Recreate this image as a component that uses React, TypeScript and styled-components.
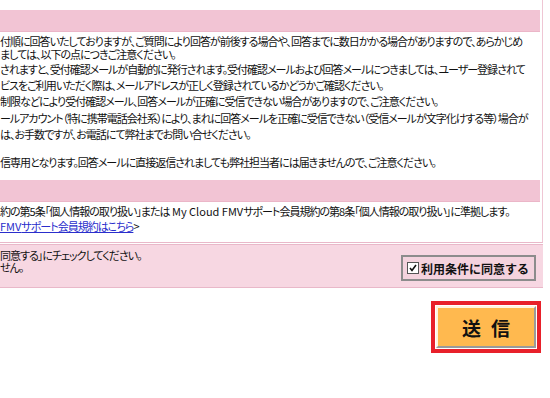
import styled, { createGlobalStyle } from 'styled-components';

const GlobalStyle = createGlobalStyle`
  html, body {
    margin: 0;
    padding: 0;
    background: #ffffff;
  }
  body {
    font-family: "Noto Sans CJK JP", "Liberation Sans", sans-serif;
    color: #111;
  }
`;

const Page = styled.div`
  width: 550px;
  height: 398px;
  overflow: hidden;
`;

const FormBox = styled.div`
  width: 542px;
  padding-top: 10px;
  border-right: 1px solid #efc6d4;
  border-bottom: 1px solid #e9b8c9;
`;

const Band = styled.div`
  height: 21px;
  margin-right: 2px;
  background: #f2c4d4;
  border-bottom: 1px solid #ebb6c8;
`;

const Body = styled.div<{ $top: number }>`
  padding-top: ${(p) => p.$top}px;
  font-size: 11px;
  letter-spacing: -1px;
  font-feature-settings: "palt";
  white-space: nowrap;
`;

const Para = styled.p<{ $lh: number; $mb: number }>`
  margin: 0 0 ${(p) => p.$mb}px;
  line-height: ${(p) => p.$lh}px;
`;

const Latin = styled.span`
  letter-spacing: 0;
`;

const Link = styled.a`
  color: #2a2ecc;
  text-decoration: underline;
`;

const AgreeRow = styled.div`
  width: 543px;
  margin-top: 1px;
  height: 44px;
  box-sizing: border-box;
  background: #f7d7e2;
  border-top: 1px solid #e9b8c9;
  border-bottom: 1px solid #e9b8c9;
  display: flex;
  align-items: flex-start;
  justify-content: space-between;
  padding-right: 7px;
`;

const AgreeText = styled.div`
  font-size: 11px;
  letter-spacing: -1px;
  font-feature-settings: "palt";
  line-height: 12px;
  white-space: nowrap;
  padding-top: 4px;
`;

const CheckLabel = styled.label`
  display: flex;
  align-items: center;
  gap: 2px;
  height: 26px;
  box-sizing: border-box;
  padding: 0 5px 0 4px;
  margin-top: 10px;
  border: 2px solid #8c8c8c;
  background: #f4d3de;
  font-size: 12px;
  font-weight: bold;
  color: #111;
`;

const Box = styled.span`
  width: 10px;
  height: 10px;
  border: 1px solid #555;
  background: #fff;
  display: flex;
  align-items: center;
  justify-content: center;
`;

const SubmitRow = styled.div`
  display: flex;
  justify-content: flex-end;
  padding: 13px 9px 0 0;
`;

const SubmitFrame = styled.div`
  border: 4px solid #e8202a;
  padding: 1px;
  background: #fff;
`;

const SubmitButton = styled.button`
  width: 100px;
  height: 42px;
  background: #ffb94f;
  border: 2px solid;
  border-color: #fff5e0 #9a9a9a #9a9a9a #fff5e0;
  font-family: "Noto Sans CJK JP", sans-serif;
  font-size: 19px;
  font-weight: bold;
  letter-spacing: 10px;
  padding: 0 0 0 10px;
  color: #111;
`;

export default function App() {
  return (
    <Page>
      <GlobalStyle />
      <FormBox>
        <Band />
        <Body $top={3}>
          <Para $lh={13} $mb={0}>
            付順に回答いたしておりますが、ご質問により回答が前後する場合や、回答までに数日かかる場合がありますので、あらかじめ
            <br />
            ましては、以下の点につきご注意ください。
          </Para>
          <Para $lh={16} $mb={1}>
            されますと、受付確認メールが自動的に発行されます。受付確認メールおよび回答メールにつきましては、ユーザー登録されて
            <br />
            ビスをご利用いただく際は、メールアドレスが正しく登録されているかどうかご確認ください。
            <br />
            制限などにより受付確認メール、回答メールが正確に受信できない場合がありますので、ご注意ください。
          </Para>
          <Para $lh={16} $mb={12}>
            ールアカウント（特に携帯電話会社系）により、まれに回答メールを正確に受信できない（受信メールが文字化けする等）場合が
            <br />
            は、お手数ですが、お電話にて弊社までお問い合せください。
          </Para>
          <Para $lh={16} $mb={10}>
            信専用となります。回答メールに直接返信されましても弊社担当者には届きませんので、ご注意ください。
          </Para>
        </Body>
        <Band />
        <Body $top={2}>
          <Para $lh={15} $mb={8}>
            約の第5条「個人情報の取り扱い」または<Latin> My Cloud FMV</Latin>サポート会員規約の第8条「個人情報の取り扱い」に準拠します。
            <br />
            <Link href="#">
              <Latin>FMV</Latin>サポート会員規約はこちら
            </Link>
            &gt;
          </Para>
        </Body>
      </FormBox>
      <AgreeRow>
        <AgreeText>
          同意する」にチェックしてください。
          <br />
          せん。
        </AgreeText>
        <CheckLabel>
          <Box>
            <svg width="8" height="8" viewBox="0 0 8 8">
              <path d="M1 4 L3 6.5 L7 1" stroke="#111" strokeWidth="1.6" fill="none" />
            </svg>
          </Box>
          利用条件に同意する
        </CheckLabel>
      </AgreeRow>
      <SubmitRow>
        <SubmitFrame>
          <SubmitButton>送信</SubmitButton>
        </SubmitFrame>
      </SubmitRow>
    </Page>
  );
}
